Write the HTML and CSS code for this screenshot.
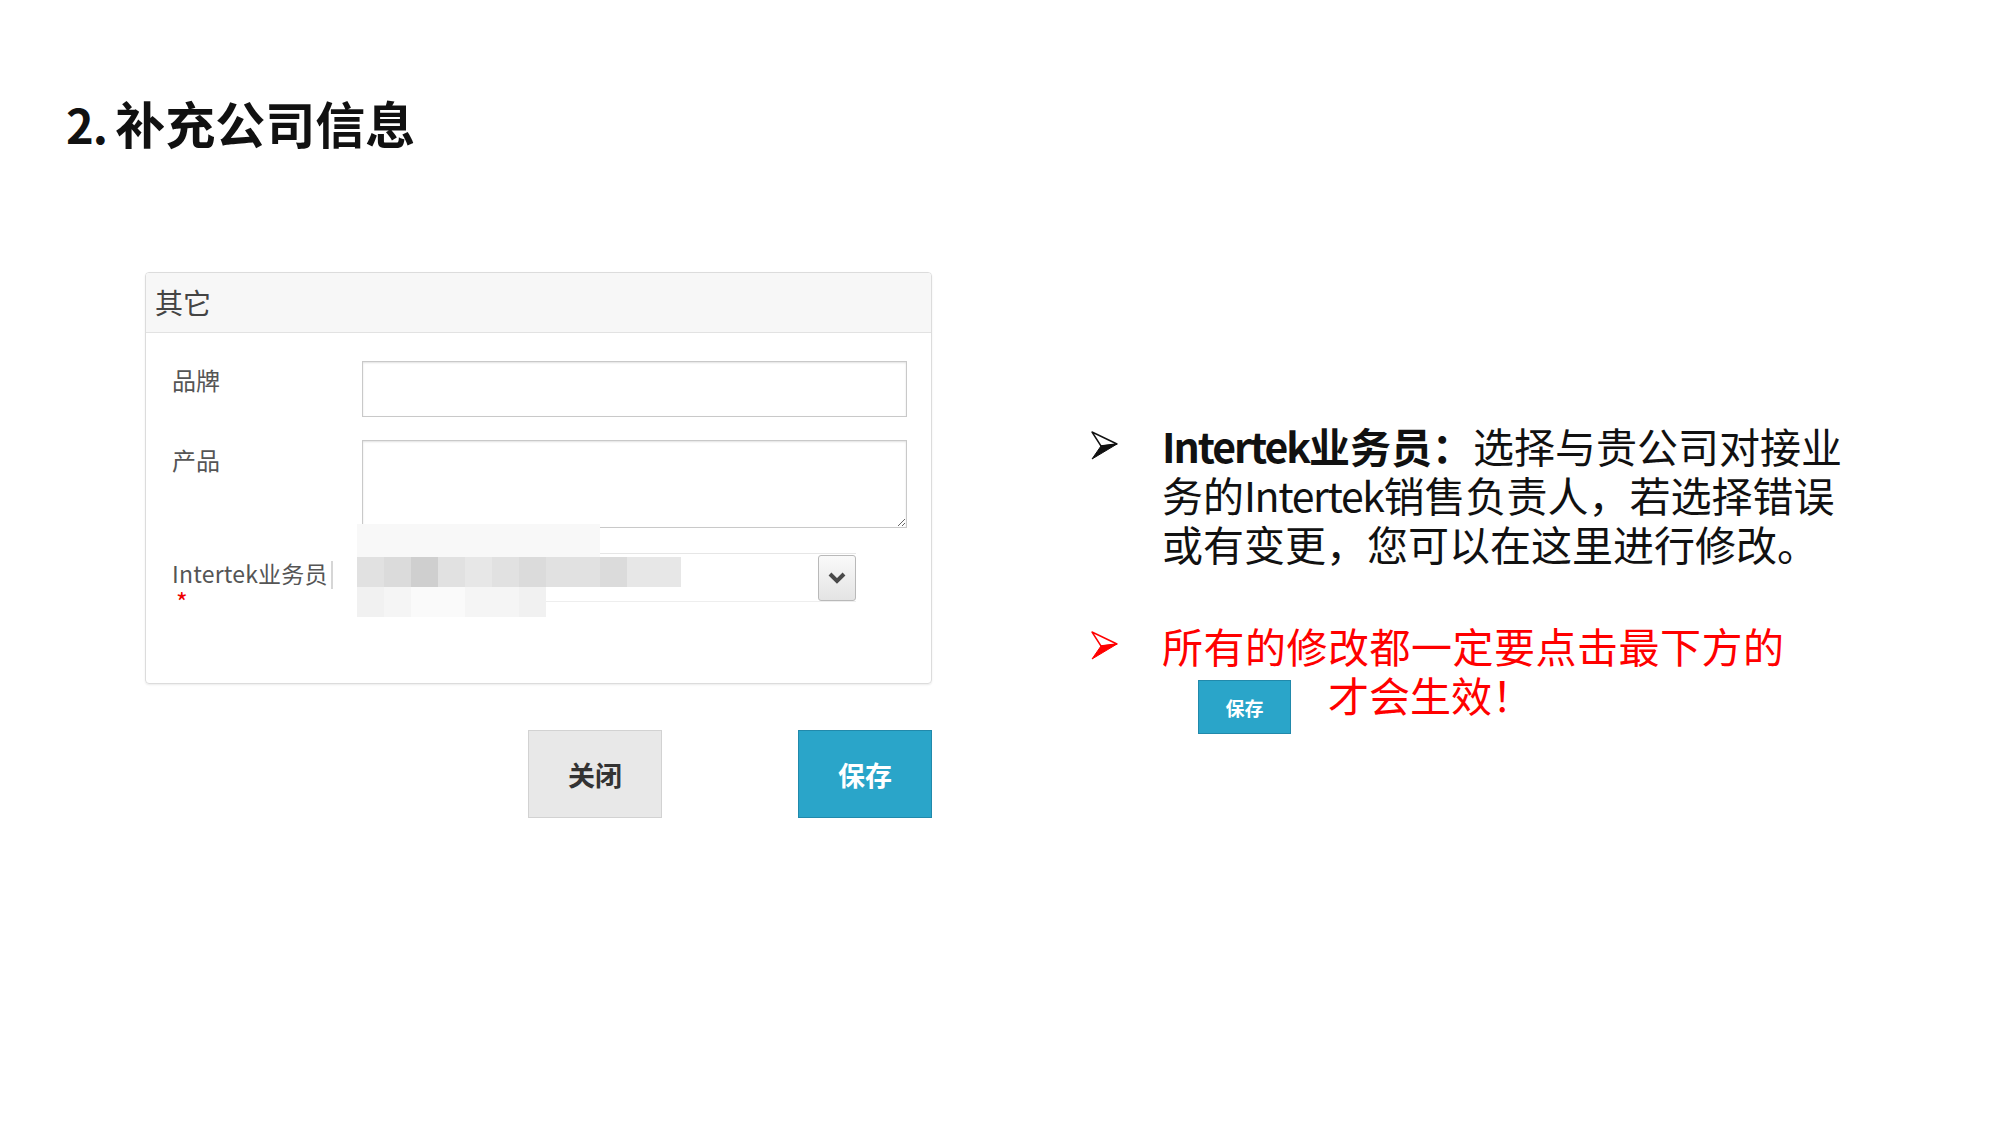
FILE: index.html
```html
<!DOCTYPE html>
<html lang="zh-CN">
<head>
    <meta charset="UTF-8">
    <meta name="viewport" content="width=device-width, initial-scale=1">
    <title>补充公司信息</title>
    <link rel="stylesheet" href="styles.css">
</head>
<body>
    <div class="slide">
        <h1 class="title"><span class="num">2.</span> 补充公司信息</h1>

        <div class="body">
            <div class="form-col">
                <div class="panel">
                    <div class="panel-head">其它</div>
                    <div class="panel-body">
                        <div class="form-row row-input">
                            <div class="label">品牌</div>
                            <input type="text" class="field">
                        </div>
                        <div class="form-row row-textarea">
                            <div class="label">产品</div>
                            <textarea class="field"></textarea>
                        </div>
                        <div class="form-row row-select">
                            <div class="label">
                                <span class="label-text">Intertek业务员</span><span class="caret-bar"></span>
                                <div class="required">*</div>
                            </div>
                            <div class="select">
                                <div class="select-value"></div>
                                <div class="select-btn">
                                    <svg width="24" height="24" viewBox="0 0 24 24">
                                        <path d="M5 8 L12 15 L19 8" fill="none" stroke="#4a4a4a" stroke-width="4" stroke-linejoin="miter"/>
                                    </svg>
                                </div>
                            </div>
                            <!-- 打码区域 -->
                            <div class="mosaic">
                                <span class="m0"></span><span class="m0"></span><span class="m0"></span><span class="m0"></span><span class="m0"></span><span class="m0"></span><span class="m0"></span><span class="m0"></span><span class="m0"></span><span class="mx"></span><span class="mx"></span><span class="mx"></span>
                                <span class="g2"></span><span class="g3"></span><span class="g4"></span><span class="g2"></span><span class="g1"></span><span class="g2"></span><span class="g3"></span><span class="g2"></span><span class="g2"></span><span class="g3"></span><span class="g1"></span><span class="g1"></span>
                                <span class="f2"></span><span class="f1"></span><span class="f0"></span><span class="f0"></span><span class="f1"></span><span class="f1"></span><span class="f2"></span><span class="mx"></span><span class="mx"></span><span class="mx"></span><span class="mx"></span><span class="mx"></span>
                            </div>
                        </div>
                    </div>
                </div>

                <div class="actions">
                    <button type="button" class="btn btn-default">关闭</button>
                    <button type="button" class="btn btn-primary">保存</button>
                </div>
            </div>

            <div class="notes">
                <div class="note">
                    <div class="arrow">
                        <svg width="30" height="32" viewBox="0 0 30 32">
                            <path d="M2 2 L27 14 L11 16 Z" fill="#fff" stroke="#111" stroke-width="1.4" stroke-linejoin="round"/>
                            <path d="M11 16 L27 14 L2 29 Z" fill="#111" stroke="#111" stroke-width="1" stroke-linejoin="round"/>
                        </svg>
                    </div>
                    <div class="note-text">
                        <b><span class="en en-bold">Intertek</span>业务员：</b>选择与贵公司对接业<br>
                        务的<span class="en">Intertek</span>销售负责人，若选择错误<br>
                        或有变更，您可以在这里进行修改。
                    </div>
                </div>

                <div class="note note-red">
                    <div class="arrow">
                        <svg width="30" height="32" viewBox="0 0 30 32">
                            <path d="M2 2 L27 14 L11 16 Z" fill="#fff" stroke="#f00" stroke-width="1.4" stroke-linejoin="round"/>
                            <path d="M11 16 L27 14 L2 29 Z" fill="#f00" stroke="#f00" stroke-width="1" stroke-linejoin="round"/>
                        </svg>
                    </div>
                    <div class="note-text">
                        <div class="wide">所有的修改都一定要点击最下方的</div>
                        <div class="note-line">
                            <span class="mini-btn">保存</span>
                            <span>才会生效！</span>
                        </div>
                    </div>
                </div>
            </div>
        </div>
    </div>
</body>
</html>
```

FILE: styles.css
```css
html, body {
    margin: 0;
    background: #fff;
}
body {
    width: 2000px;
    height: 1125px;
    overflow: hidden;
    font-family: "Noto Sans CJK SC", "Noto Sans", sans-serif;
    color: #111;
}
.slide {
    padding: 92px 0 0 66px;
}
.title {
    margin: 0;
    height: 60px;
    font-size: 50px;
    line-height: 60px;
    font-weight: 700;
    color: #111;
}
.title .num {
    font-size: 47px;
    line-height: 1;
    letter-spacing: -1px;
    margin-right: -3px;
}
.body {
    display: flex;
    align-items: flex-start;
    margin-top: 120px;
    padding-left: 79px;
}

/* 表单面板 */
.form-col {
    width: 787px;
}
.panel {
    box-sizing: border-box;
    height: 412px;
    border: 1px solid #dcdcdc;
    border-radius: 4px;
    box-shadow: 0 1px 2px rgba(0, 0, 0, 0.08);
    overflow: hidden;
}
.panel-head {
    height: 59px;
    line-height: 59px;
    padding-left: 9px;
    background: #f7f7f7;
    border-bottom: 1px solid #e2e2e2;
    font-size: 28px;
    color: #444;
}
.panel-body {
    padding: 28px 24px 0 26px;
}
.form-row {
    display: flex;
    position: relative;
}
.label {
    width: 190px;
    flex-shrink: 0;
    padding-top: 4px;
    font-size: 24px;
    line-height: 30px;
    color: #555;
}
.field {
    box-sizing: border-box;
    flex: 1;
    margin: 0;
    border: 1px solid #c9c9c9;
    box-shadow: inset 0 1px 2px rgba(0, 0, 0, 0.12);
    background: #fff;
    font-family: inherit;
    font-size: 20px;
    outline: none;
}
.row-input {
    height: 56px;
    margin-bottom: 23px;
}
.row-textarea {
    height: 88px;
    margin-bottom: 25px;
}
.row-textarea .label {
    padding-top: 5px;
}
.row-select {
    height: 49px;
}
.row-select .label {
    padding-top: 5px;
    font-size: 23px;
}
.label-text {
    letter-spacing: 0.2px;
}
.caret-bar {
    display: inline-block;
    width: 2px;
    height: 28px;
    margin-left: 3px;
    vertical-align: -6px;
    background: #d6d6d6;
}
.required {
    margin: 4px 0 0 4px;
    font-size: 25px;
    line-height: 16px;
    color: #e00;
}
.select {
    display: flex;
    width: 494px;
    height: 49px;
    box-sizing: border-box;
    border-top: 1px solid #e6e6e6;
    border-bottom: 1px solid #eeeeee;
    background: #fff;
}
.select-value {
    flex: 1;
}
.select-btn {
    box-sizing: border-box;
    width: 38px;
    height: 46px;
    margin-top: 1px;
    display: flex;
    align-items: center;
    justify-content: center;
    border: 1px solid #b9b9b9;
    border-radius: 3px;
    background: linear-gradient(#fafafa, #e4e4e4);
}

/* 打码 */
.mosaic {
    position: absolute;
    left: 185px;
    top: -29px;
    display: grid;
    grid-template-columns: repeat(12, 27px);
    grid-template-rows: 33px 30px 30px;
}
.m0 { background: #f8f8f8; }
.mx { background: transparent; }
.g1 { background: #e7e7e7; }
.g2 { background: #e1e1e1; }
.g3 { background: #dbdbdb; }
.g4 { background: #cfcfcf; }
.f0 { background: #fafafa; }
.f1 { background: #f5f5f5; }
.f2 { background: #f1f1f1; }

/* 按钮 */
.actions {
    display: flex;
    justify-content: flex-end;
    gap: 136px;
    margin-top: 46px;
}
.btn {
    box-sizing: border-box;
    width: 134px;
    height: 88px;
    border-radius: 0;
    font-family: inherit;
    font-size: 27px;
    font-weight: 700;
    cursor: pointer;
}
.btn-default {
    background: #e8e8e8;
    border: 1px solid #d2d2d2;
    color: #333;
}
.btn-primary {
    background: #2aa5c9;
    border: 1px solid #2189ab;
    color: #fff;
}

/* 右侧说明 */
.notes {
    margin-left: 158px;
    margin-top: 149px;
}
.note {
    display: flex;
    font-size: 41px;
    line-height: 49px;
    white-space: nowrap;
}
.note + .note {
    margin-top: 53px;
}
.note b {
    font-weight: 700;
}
.en {
    letter-spacing: -1.4px;
}
.en-bold {
    letter-spacing: -2px;
}
.wide {
    letter-spacing: 0.5px;
}
.arrow {
    width: 72px;
    height: 49px;
    flex-shrink: 0;
    display: flex;
    align-items: center;
}
.note-red {
    color: #f00;
}
.note-line {
    display: flex;
    align-items: flex-start;
    padding-left: 36px;
}
.mini-btn {
    box-sizing: border-box;
    width: 93px;
    height: 54px;
    margin-top: 10px;
    margin-right: 37px;
    display: flex;
    align-items: center;
    justify-content: center;
    background: #2aa5c9;
    border: 1px solid #2189ab;
    color: #fff;
    font-size: 19px;
    font-weight: 700;
    line-height: 1;
}
```
